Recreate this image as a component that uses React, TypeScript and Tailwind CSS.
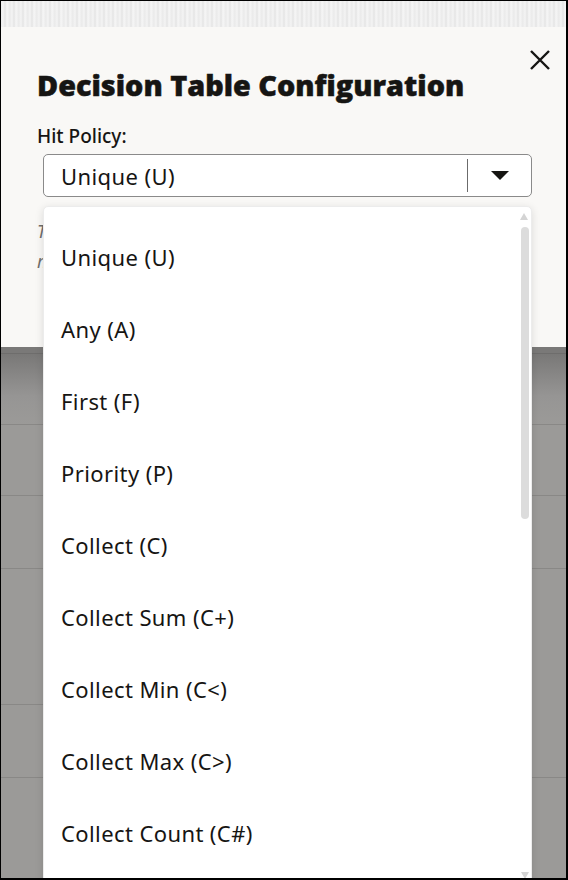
import React from "react";

const items = [
  "Unique (U)",
  "Any (A)",
  "First (F)",
  "Priority (P)",
  "Collect (C)",
  "Collect Sum (C+)",
  "Collect Min (C<)",
  "Collect Max (C>)",
  "Collect Count (C#)",
  "Rule Order (R)",
  "Output Order (O)",
];

export default function App() {
  return (
    <div className="relative w-[568px] h-[880px] overflow-hidden bg-[#9b9a98] border-l border-t border-r-2 border-b-2 border-black font-['Noto_Sans',sans-serif] text-[#161513]">
      {/* top blurred strip */}
      <div className="h-[26px] bg-[repeating-linear-gradient(90deg,#ebebeb_0px,#f4f4f4_2px,#e4e4e4_4px,#f6f6f6_6px,#e9e9e9_9px)]" />

      {/* dialog */}
      <div className="relative h-[320px] bg-[#f9f8f6] px-[36px] pt-[40px]">
        <button className="absolute right-[14px] top-[21px] w-[24px] h-[24px] flex items-center justify-center">
          <svg width="22" height="22" viewBox="0 0 22 22">
            <path d="M2 2 L20 20 M20 2 L2 20" stroke="#161513" strokeWidth="2.4" />
          </svg>
        </button>
        <h1 className="font-['Open_Sans',sans-serif] font-extrabold text-[28.8px] leading-[36px] [-webkit-text-stroke:0.5px_#161513]">
          Decision Table Configuration
        </h1>
        <div className="mt-[22px] text-[19px] leading-[22px] font-medium">Hit Policy:</div>
        <div className="ml-[6px] mt-[7px] w-[489px] h-[43px] rounded-[5px] border border-[#8a8a8a] bg-white flex items-center">
          <div className="flex-1 pl-[17px] text-[22px] leading-[28px] tracking-[0.4px]">Unique (U)</div>
          <div className="w-px h-[33px] bg-[#6b6b6b]" />
          <div className="w-[63px] flex items-center justify-center">
            <svg width="18" height="9" viewBox="0 0 18 9">
              <path d="M0 0 H18 L9 9 Z" fill="#161513" />
            </svg>
          </div>
        </div>
        <div className="mt-[19px] text-[18px] leading-[30px] italic text-[#6f6e6c]">
          <div>The hit policy determines which rules apply</div>
          <div>matching the input values of the table.</div>
        </div>
      </div>

      {/* shadow band below dialog */}
      <div className="h-[7px] bg-[#7a7978] border-b border-[#6e6d6c]" />
      <div className="h-[71px] bg-[linear-gradient(180deg,#797877_0%,#969594_60%,#9b9a98_100%)] border-b border-[#898886]" />
      <div className="h-[71px] border-b border-[#898886]" />
      <div className="h-[73px] border-b border-[#898886]" />
      <div className="h-[136px] flex">
        <div className="w-[42px] h-[136px] border-b border-[#898886]" />
      </div>
      <div className="h-[73px] border-b border-[#898886]" />

      {/* dropdown list */}
      <div className="absolute left-[42px] top-[205px] w-[489px] h-[690px] bg-white rounded-[5px] border border-[#ececec] shadow-[0_2px_8px_rgba(0,0,0,0.12)] overflow-hidden">
        <div className="pt-[14px]">
          {items.map((t) => (
            <div key={t} className="h-[72px] flex items-center pl-[17px] text-[22px] leading-[28px] tracking-[0.4px]">
              {t}
            </div>
          ))}
        </div>
        {/* scrollbar */}
        <svg className="absolute left-[476px] top-[6px]" width="8" height="7" viewBox="0 0 8 7">
          <path d="M0 7 L4 0 L8 7 Z" fill="#d4d4d4" />
        </svg>
        <div className="absolute left-[477px] top-[20px] w-[8px] h-[292px] rounded-full bg-[#dcdcdc]" />
        <svg className="absolute left-[477px] top-[665px]" width="8" height="7" viewBox="0 0 8 7">
          <path d="M0 0 L8 0 L4 7 Z" fill="#d4d4d4" />
        </svg>
      </div>
    </div>
  );
}
